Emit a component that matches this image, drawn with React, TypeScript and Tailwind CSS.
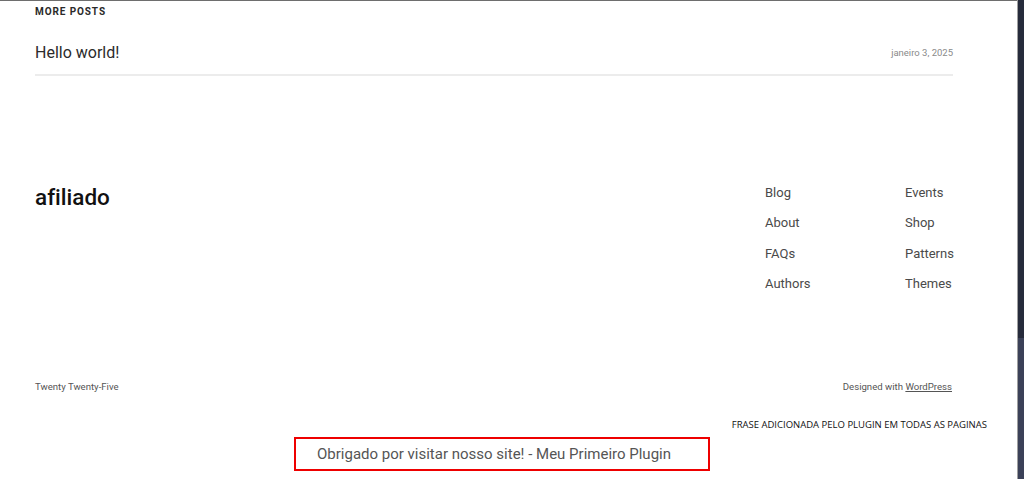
import React from "react";

export default function App() {
  const navA = ["Blog", "About", "FAQs", "Authors"];
  const navB = ["Events", "Shop", "Patterns", "Themes"];
  return (
    <div className="flex w-[1024px] h-[479px] overflow-hidden bg-white [font-variant-ligatures:none]" style={{ fontFamily: "Roboto, 'Noto Sans', sans-serif" }}>
      <main className="flex-1 flex flex-col border-t border-[#6e6e6e]">
        <div className="pl-[35px] w-[953px]">
          <div className="pt-[4px] text-[10px] leading-[14px] font-bold tracking-[0.09em] text-[#2a2a2a]">MORE POSTS</div>
          <div className="mt-[22px] flex justify-between items-center pb-[9px] border-b-2 border-[#ececec]">
            <span className="text-[16px] leading-[24px] text-[#2b2b2b]">Hello world!</span>
            <span className="text-[9.5px] leading-[14px] text-[#8a8a8a]">janeiro 3, 2025</span>
          </div>
          <div className="mt-[102px] flex justify-between items-start">
            <div className="mt-[4px] text-[22.5px] leading-[30px] font-medium text-[#111]">afiliado</div>
            <div className="flex">
              <div className="w-[140px] flex flex-col">
                {navA.map((n) => (
                  <span key={n} className="text-[13px] leading-[30.3px] text-[#4a4a4a]">{n}</span>
                ))}
              </div>
              <div className="w-[48px] flex flex-col whitespace-nowrap">
                {navB.map((n) => (
                  <span key={n} className="text-[13px] leading-[30.3px] text-[#4a4a4a]">{n}</span>
                ))}
              </div>
            </div>
          </div>
          <div className="mt-[81px] flex justify-between items-center text-[9.6px] leading-[14px] text-[#555]">
            <span>Twenty Twenty-Five</span>
            <span className="mr-[1px]">
              Designed with <span className="underline">WordPress</span>
            </span>
          </div>
        </div>
        <div className="mt-[25px] pr-[30px] text-right text-[9.5px] leading-[12px] text-[#111]" style={{ fontFamily: "'Open Sans', 'Noto Sans', sans-serif" }}>
          FRASE ADICIONADA PELO PLUGIN EM TODAS AS PAGINAS
        </div>
        <div className="mt-[6px] ml-[294px] w-[416px] h-[34px] border-2 border-[#ee0000] pl-[21px] flex items-center">
          <span className="text-[15px] leading-[20px] text-[#555]">Obrigado por visitar nosso site! - Meu Primeiro Plugin</span>
        </div>
      </main>
      <div className="w-[7px] flex flex-col border-l border-[#a0a0a0] bg-[#262b3b]">
        <div className="h-[338px]" />
        <div className="flex-1 bg-[#3b4158]" />
      </div>
    </div>
  );
}
